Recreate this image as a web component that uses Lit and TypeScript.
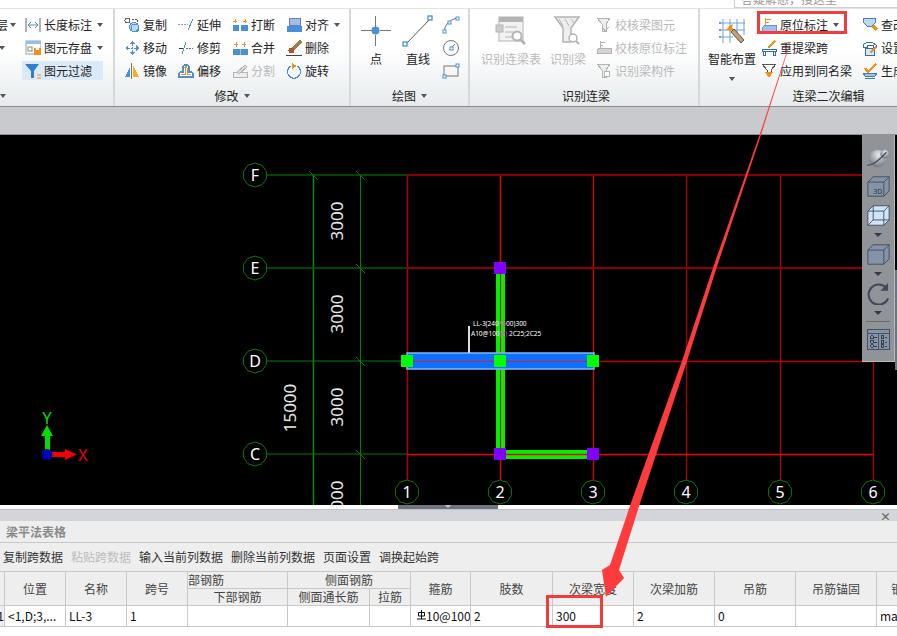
import { LitElement, css, html, svg } from "lit";
import { customElement } from "lit/decorators.js";

const BLUE = "#4a90d9";
const ORANGE = "#f0901e";
const GREY = "#b4b4b4";

// small 16x16 ribbon icons
const icons: Record<string, unknown> = {
  length: svg`<path d="M1 1v14M15 1v14" stroke="#666"/><path d="M3 8h10M3 8l3-3M3 8l3 3M13 8l-3-3M13 8l-3 3" stroke=${BLUE} fill="none"/>`,
  save: svg`<rect x="1" y="1" width="15" height="13" fill="#fff" stroke="#8aa"/><rect x="1" y="1" width="15" height="3" fill="#9cc0e4"/><rect x="3" y="7" width="4" height="4" fill="none" stroke="#888"/><rect x="9" y="8" width="7" height="7" fill=${ORANGE}/><rect x="11" y="8" width="3" height="2" fill="#fff"/>`,
  filter: svg`<path d="M0 1h14L9 8v7H6V8z" fill="#2f7fd0"/><path d="M12 12h4M12 15h4" stroke=${ORANGE}/>`,
  copy: svg`<circle cx="3.500" cy="3.500" r="2.500" fill="none" stroke="#666"/><circle cx="10" cy="10" r="4.500" fill="#bfd9f2" stroke=${BLUE}/><circle cx="11" cy="11" r="4" fill="none" stroke=${BLUE}/><path d="M8 2h5l1 3" stroke="#555" fill="none" stroke-dasharray="2 1"/>`,
  move: svg`<path d="M8 1l3 3H5zM8 15l-3-3h6zM1 8l3-3v6zM15 8l-3 3V5z" fill=${BLUE}/><path d="M8 4v8M4 8h8" stroke=${BLUE} stroke-dasharray="2 1"/>`,
  mirror: svg`<path d="M1 14L6 4v10z" fill=${BLUE}/><path d="M9 2v12h6z" fill="#f6b01c"/><path d="M7.500 0v16" stroke="#777"/>`,
  extend: svg`<path d="M0 7h10" stroke="#99a" stroke-dasharray="2 1"/><path d="M10 13L15 2" stroke=${BLUE}/>`,
  trim: svg`<path d="M1 8h5" stroke="#333"/><path d="M8 8h7" stroke="#667" stroke-dasharray="2 1"/><path d="M4 14L8 2" stroke=${BLUE}/>`,
  offset: svg`<path d="M1 14v-3q0-2 3-2h1V4q0-2 3-2t3 2v5h1q3 0 3 2v3z" fill="#fff" stroke=${BLUE} stroke-width="1.400"/><path d="M3 12q0-1 2-1h2V4.500q0-1 1-1t1 1V11h3q1 0 1 1" fill="none" stroke=${ORANGE}/>`,
  cut: svg`<rect x="1" y="8" width="6" height="6" fill=${BLUE}/><rect x="9" y="8" width="7" height="6" fill=${BLUE}/><path d="M3 2v4M1 4h4M13 2v4M11 4h4" stroke=${ORANGE}/>`,
  merge: svg`<rect x="1" y="9" width="15" height="6" fill=${BLUE}/><path d="M8.500 9v6" stroke="#9cc4ec"/><path d="M4 2v5M2 4h4M12 2v5M10 4h4" stroke=${ORANGE}/>`,
  split: svg`<path d="M1 9h14v5H1z" fill="#eee" stroke=${GREY}/><path d="M5 9l8-7 2 2-8 7z" fill="#ddd" stroke=${GREY}/>`,
  align: svg`<rect x="3" y="1" width="11" height="7" fill="#9cc0e8" stroke="#77a"/><rect x="1" y="9" width="15" height="6" fill=${BLUE}/>`,
  erase: svg`<path d="M7 9L15 1" stroke="#a87a4a" stroke-width="3"/><circle cx="5.500" cy="10.500" r="3" fill="#b0552a"/><path d="M0 15h16" stroke="#444"/>`,
  rotate: svg`<path d="M5 3a6.500 6.500 0 1 0 6 0" fill="none" stroke=${BLUE} stroke-width="1.300"/><path d="M6 0v6l5-3z" fill=${ORANGE}/>`,
  chkBeam: svg`<path d="M1 1h13l-4 6v7H6V7z" fill="#eee" stroke=${GREY}/><path d="M7 11l2 3 4-4" stroke=${GREY} fill="none"/>`,
  chkPos: svg`<path d="M4 1v7M4 2h5M4 5h3" stroke=${GREY} fill="none"/><path d="M1 10l3-2h11v5H1z" fill="#d4d4d4" stroke=${GREY}/>`,
  findBeam: svg`<path d="M1 1h13l-4 6v7H6V7z" fill="#eee" stroke=${GREY}/><circle cx="11" cy="11" r="3" fill="#fff" stroke=${GREY}/>`,
  orig: svg`<path d="M4 1v7M4 2h6M4 5h4" stroke=${ORANGE} fill="none"/><path d="M1 11l3-3h11v7H1z" fill="#9cc0e8" stroke="#6a92c0"/>`,
  lift: svg`<path d="M7 8l7-7" stroke=${ORANGE} stroke-width="2.500"/><path d="M1 9h14v2H1zM2 11v4h2v-4M12 11v4h2v-4" fill="#fff" stroke="#2f6fb0"/>`,
  apply: svg`<path d="M1 1h14l-5 6v2H6V7z" fill="#fff" stroke="#555"/><path d="M4 9h8l-4 6z" fill=${ORANGE}/>`,
  query: svg`<path d="M1 1h12v5l-3 3H5L1 5z" fill="#bcd8f2" stroke="#4a7cae"/><path d="M11 9l4 4" stroke=${ORANGE} stroke-width="3"/>`,
  setup: svg`<path d="M1 5q6-6 13 0v2h-3V5H5v2H1z" fill="#fff" stroke="#2f6fb0"/><rect x="3" y="8" width="9" height="7" fill="#d8e6f4" stroke="#2f6fb0"/><path d="M8 13l6-6" stroke=${ORANGE} stroke-width="2"/>`,
  make: svg`<path d="M3 5l3 4 8-8" stroke=${ORANGE} stroke-width="2.200" fill="none"/><path d="M1 10h14l-2 3H3z" fill="#9cc0e8" stroke="#4a7cae"/><path d="M3 15h10" stroke="#4a7cae"/>`,
};

// big 32x32 ribbon icons
const bigIcons: Record<string, unknown> = {
  point: svg`<path d="M15.500 1v11M15.500 20v11M1 15.500h11M20 15.500h11" stroke="#777"/><circle cx="15.500" cy="15.500" r="4" fill=${BLUE}/>`,
  line: svg`<path d="M4 29L28 4" stroke="#555"/><rect x="1" y="27" width="4" height="4" fill="#fff" stroke=${BLUE} stroke-width="1.300"/><rect x="26" y="1" width="4" height="4" fill="#fff" stroke=${BLUE} stroke-width="1.300"/>`,
  table: svg`<rect x="4" y="2" width="24" height="24" fill="#f2f2f2" stroke=${GREY}/><rect x="4" y="2" width="24" height="5" fill=${GREY}/><rect x="1" y="10" width="7" height="7" fill="#ccc" stroke=${GREY}/><path d="M10 12h12M10 17h8M10 22h8" stroke=${GREY}/><circle cx="22" cy="21" r="4.500" fill="#fff" stroke=${GREY} stroke-width="2"/><path d="M25 24l5 5" stroke=${GREY} stroke-width="2.500"/>`,
  beam: svg`<path d="M3 2h24l-8 11v14h-8V13z" fill="#eee" stroke=${GREY} stroke-width="1.500"/><path d="M7 4l4 7M13 4l4 7M19 4l3 4" stroke=${GREY}/><circle cx="21" cy="23" r="4" fill="#fff" stroke=${GREY} stroke-width="1.500"/><path d="M24 26l3 3" stroke=${GREY} stroke-width="2"/>`,
  smart: svg`<path d="M7 4v24M14 4v24M21 4v16M28 4v16M3 8h26M3 15h26M3 22h14" stroke="#6fa2dc" fill="none"/><path d="M3 8h2M3 15h2M3 22h2" stroke="#35c"/><path d="M13 11l4-2-1 4 3 2-4 0-1 3-1-3-4 0 3-2z" fill=${ORANGE}/><path d="M18 14l10 11-3 3-10-11z" fill="#c8a070" stroke="#555"/>`,
};

const tools = (a: [string, string, boolean?, boolean?][]) => a;

const editRows = tools([
  ["copy", "复制"], ["extend", "延伸"], ["cut", "打断"], ["align", "对齐", false, true],
  ["move", "移动"], ["trim", "修剪"], ["merge", "合并"], ["erase", "删除"],
  ["mirror", "镜像"], ["offset", "偏移"], ["split", "分割", true], ["rotate", "旋转"],
]);
const checkRows = tools([
  ["chkBeam", "校核梁图元", true], ["chkPos", "校核原位标注", true], ["findBeam", "识别梁构件", true],
]);
const beamRows = tools([
  ["orig", "原位标注", false, true], ["lift", "重提梁跨"], ["apply", "应用到同名梁"],
]);
const moreRows = tools([
  ["query", "查改标注"], ["setup", "设置"], ["make", "生成"],
]);

const axisX = [407, 500, 593, 686, 780, 873];
const axisY: [string, number][] = [["F", 175], ["E", 268], ["D", 361], ["C", 454]];

const ring = (x: number, y: number) => {
  const pts: string[] = [];
  for (let i = 0; i < 10; i++) {
    const a = (Math.PI / 5) * i + Math.PI / 10;
    pts.push(`${(x + 12 * Math.cos(a)).toFixed(1)},${(y + 12 * Math.sin(a)).toFixed(1)}`);
  }
  return pts.join(" ");
};

const bubble = (label: string, x: number, y: number) => svg`
  <polygon points=${ring(x, y)} fill="#000" stroke="#0a7a0a" />
  <text x=${x} y=${y + 6} class="bubble" text-anchor="middle">${label}</text>`;

const dim = (label: string, x: number, y: number) => svg`
  <text class="dim" text-anchor="middle" transform="translate(${x} ${y}) rotate(-90)">${label}</text>`;

const tick = (x: number, y: number) => svg`<path d="M${x - 4} ${y - 4}l9 9" stroke="#0a7a0a" />`;

const sq = (x: number, y: number, fill: string) => svg`<rect x=${x - 6} y=${y - 6} width="12" height="12" fill=${fill} />`;

@customElement("app-root")
export class AppRoot extends LitElement {
  private tool([icon, label, off, more]: [string, string, boolean?, boolean?]) {
    return html`<div class="tool ${off ? "off" : ""}">
      <svg class="ico" viewBox="0 0 16 16" shape-rendering="crispEdges">${icons[icon]}</svg>
      <span>${label}</span>
      ${more ? html`<i class="caret"></i>` : ""}
    </div>`;
  }

  private big(icon: string, label: string, off = false) {
    return html`<div class="big ${off ? "off" : ""}">
      <svg class="bigico" viewBox="0 0 32 32">${bigIcons[icon]}</svg>
      <span>${label}</span>
    </div>`;
  }

  private ribbon() {
    return html`<div class="ribbon">
      <section class="group g0">
        <div class="body">
          <div class="stack stub">
            <div class="tool"><span class="cut-left">层</span><i class="caret"></i></div>
            <div class="tool"><i class="caret"></i></div>
          </div>
          <div class="stack">
            <div class="tool"><svg class="ico" viewBox="0 0 16 16">${icons.length}</svg><span>长度标注</span><i class="caret"></i></div>
            <div class="tool"><svg class="ico" viewBox="0 0 16 16">${icons.save}</svg><span>图元存盘</span><i class="caret"></i></div>
            <div class="tool on"><svg class="ico" viewBox="0 0 16 16">${icons.filter}</svg><span>图元过滤</span></div>
          </div>
        </div>
        <div class="label"><i class="caret"></i></div>
      </section>
      <section class="group g1">
        <div class="body edit">${editRows.map((t) => this.tool(t))}</div>
        <div class="label">修改<i class="caret"></i></div>
      </section>
      <section class="group g2">
        <div class="body">
          ${this.big("point", "点")}
          ${this.big("line", "直线")}
          <div class="minis">
            <svg viewBox="0 0 18 18"><path d="M2 16Q3 5 15 2" fill="none" stroke="#777"/><rect x="1" y="14" width="3" height="3" fill="#fff" stroke=${BLUE}/><rect x="14" y="1" width="3" height="3" fill="#fff" stroke=${BLUE}/><rect x="6" y="5" width="3" height="3" fill="#fff" stroke=${BLUE}/></svg>
            <svg viewBox="0 0 18 18"><circle cx="9" cy="9" r="7.500" fill="none" stroke="#777"/><path d="M9 9l4-4" stroke="#777"/><rect x="8" y="8" width="3" height="3" fill="#fff" stroke=${BLUE}/></svg>
            <svg viewBox="0 0 18 18"><rect x="2" y="4" width="14" height="10" fill="none" stroke="#777"/><rect x="1" y="13" width="3" height="3" fill="#fff" stroke=${BLUE}/><rect x="14" y="2" width="3" height="3" fill="#fff" stroke=${BLUE}/></svg>
          </div>
        </div>
        <div class="label">绘图<i class="caret"></i></div>
      </section>
      <section class="group g3">
        <div class="body">
          ${this.big("table", "识别连梁表", true)}
          ${this.big("beam", "识别梁", true)}
          <div class="stack">${checkRows.map((t) => this.tool(t))}</div>
        </div>
        <div class="label">识别连梁</div>
      </section>
      <section class="group g4">
        <div class="body">
          <div class="big smart">
            <svg class="bigico" viewBox="0 0 32 32">${bigIcons.smart}</svg>
            <span>智能布置</span>
            <i class="caret"></i>
          </div>
          <div class="stack">${beamRows.map((t) => this.tool(t))}</div>
          <div class="stack more">${moreRows.map((t) => this.tool(t))}</div>
        </div>
        <div class="label">连梁二次编辑</div>
      </section>
    </div>`;
  }

  private drawing() {
    return html`<svg class="cad" viewBox="0 135 897 370">
      <path d="M313.500 175V505" stroke="#008a00" stroke-width="1.500" />
      <path d="M360.500 175V505" stroke="#008000" />
      <path d="M267 175H407M267 268H407" stroke="#005c00" stroke-width="1.500" />
      <path d="M267 361H407M267 454H407" stroke="#0a7a0a" />
      ${[[313, 175], [360, 175], [360, 268], [360, 361], [360, 454]].map(([x, y]) => tick(x, y))}
      <path d="M407.500 175V480" stroke="#b00000" stroke-width="1.500" />
      <path d="M686.500 175V480M780.500 175V480M873.500 361V480" stroke="#b00000" stroke-width="1.300" />
      <path d="M500.500 175V480" stroke="#e00000" stroke-width="1.500" />
      <path d="M593.500 175V480" stroke="#e00000" stroke-width="1.300" />
      <path d="M407 175H873M407 268H873" stroke="#8c0000" stroke-width="2" />
      <path d="M407 361.500H873" stroke="#b80000" stroke-width="1.300" />
      <rect x="496" y="268" width="9" height="186" fill="#00f000" />
      <rect x="500" y="450" width="93" height="9" fill="#00f000" />
      <path d="M407 454.500H873" stroke="#f00000" stroke-width="1.300" />
      <path d="M500.500 268V460" stroke="#f00000" />
      <rect x="407" y="353" width="187" height="16" fill="#0f6fff" stroke="#7fb7ff" stroke-width="1.500" />
      <path d="M407 361.500H594" stroke="#d02040" />
      <rect x="468" y="326" width="2" height="27" fill="#ddd" />
      <text class="note" x="473" y="326">LL-3(240<tspan fill="#ff40ff">*5</tspan>00)300</text>
      <text class="note" x="471" y="336">A10@100<tspan fill="#ff40ff">(2)</tspan> 2C25;2C25</text>
      ${sq(500, 268, "#8000ff")} ${sq(500, 454, "#8000ff")} ${sq(593, 454, "#8000ff")}
      ${sq(407, 361, "#00ff00")} ${sq(500, 361, "#00ff00")} ${sq(593, 361, "#00ff00")}
      ${axisY.map(([l, y]) => bubble(l, 255, y))}
      ${axisX.map((x, i) => bubble(String(i + 1), x, 492))}
      ${dim("3000", 343, 221)} ${dim("3000", 343, 314)} ${dim("3000", 343, 407)} ${dim("3000", 343, 500)}
      ${dim("15000", 296, 408)}
      <rect x="45" y="432" width="5" height="20" fill="#00e000" />
      <path d="M47 425l6 11H41z" fill="#00e000" />
      <rect x="50" y="452" width="18" height="5" fill="#f00000" />
      <path d="M77 454.500l-12 5.500v-11z" fill="#f00000" />
      <circle cx="47" cy="454.500" r="5.500" fill="#0000b4" />
      <text class="axis" x="47" y="424" fill="#00e000" text-anchor="middle">Y</text>
      <text class="axis" x="83" y="461" fill="#f00000" text-anchor="middle">X</text>
    </svg>`;
  }

  private viewBar() {
    return html`<div class="viewbar">
      <svg class="globe" viewBox="0 0 28 24">
        <defs><radialGradient id="gl" cx=".55" cy=".3" r=".8"><stop offset="0" stop-color="#e8ecf0"/><stop offset="1" stop-color="#5e6670"/></radialGradient></defs>
        <ellipse cx="13" cy="13" rx="10" ry="10" fill="url(#gl)"/>
        <circle cx="21" cy="8" r="5" fill="url(#gl)"/>
        <path d="M1 21Q10 21 23 6" fill="none" stroke="#4b5462" stroke-width="1.500"/>
      </svg>
      <svg class="cube" viewBox="0 0 26 24">
        <path d="M1 7L7 1H25V17L19 23H1z" fill="#8593a8" stroke="#3f4858"/><path d="M1 7H19V23M19 7L25 1" fill="none" stroke="#3f4858"/>
        <text x="7" y="21" class="cube3d">3D</text>
      </svg>
      <svg class="cube" viewBox="0 0 26 24">
        <path d="M1 7L7 1H25V17L19 23H1z" fill="#cfe4fb" stroke="#3f4858"/><path d="M1 7H19V23M19 7L25 1M7 1V17H25M7 17L1 23" fill="none" stroke="#3f4858"/>
      </svg>
      <i class="drop"></i>
      <svg class="cube" viewBox="0 0 26 24">
        <path d="M1 7L7 1H25V17L19 23H1z" fill="#8593a8" stroke="#3f4858"/><path d="M1 7H19V23M19 7L25 1" fill="none" stroke="#3f4858"/>
      </svg>
      <i class="drop"></i>
      <svg class="cube" viewBox="0 0 24 24">
        <path d="M20 6A10.500 10.500 0 1 0 22 17" fill="none" stroke="#3f4858" stroke-width="2.200"/><path d="M22 1v8h-8z" fill="#3f4858"/>
      </svg>
      <i class="drop"></i>
      <hr />
      <svg class="cube" viewBox="0 0 26 24" shape-rendering="crispEdges">
        <rect x="1" y="1" width="24" height="22" fill="#8593a8" stroke="#3f4858"/><path d="M1 5H25M13 5V23" stroke="#3f4858"/>
        <path d="M4 8h3v3H4zM4 13h3v3H4zM4 18h3v3H4zM16 8h3v3h-3zM16 13h3v3h-3zM16 18h3v3h-3z" fill="none" stroke="#2e3644"/>
        <path d="M8 10h3M8 15h3M8 20h3M20 10h3M20 15h3M20 20h3" stroke="#2e3644"/>
      </svg>
    </div>`;
  }

  private table() {
    return html`<div class="grid">
      <div class="th r2 first"></div>
      <div class="th r2">位置</div>
      <div class="th r2">名称</div>
      <div class="th r2">跨号</div>
      <div class="th left">部钢筋</div>
      <div class="th c2">侧面钢筋</div>
      <div class="th r2">箍筋</div>
      <div class="th r2">肢数</div>
      <div class="th r2">次梁宽度</div>
      <div class="th r2">次梁加筋</div>
      <div class="th r2">吊筋</div>
      <div class="th r2">吊筋锚固</div>
      <div class="th r2 end">钢筋</div>
      <div class="th">下部钢筋</div>
      <div class="th">侧面通长筋</div>
      <div class="th">拉筋</div>
      <div class="td first">1</div>
      <div class="td">&lt;1,D;3,...</div>
      <div class="td">LL-3</div>
      <div class="td">1</div>
      <div class="td"></div>
      <div class="td"></div>
      <div class="td"></div>
      <div class="td"><svg class="rebar" viewBox="0 0 9 10"><path d="M1.500 2.500h6v3.500h-6zM4.500 0v9M0 9h9" fill="none" stroke="#111"/></svg>10@100</div>
      <div class="td">2</div>
      <div class="td">300</div>
      <div class="td">2</div>
      <div class="td">0</div>
      <div class="td"></div>
      <div class="td end">ma</div>
    </div>`;
  }

  render() {
    return html`
      <div class="topline"><div class="search">答疑解惑，搜这里</div></div>
      ${this.ribbon()}
      <div class="band"></div>
      <div class="view">
        ${this.drawing()}
        ${this.viewBar()}
        <div class="edge"></div>
      </div>
      <div class="splitter"><div class="handle"><i></i></div></div>
      <div class="panel">
        <div class="titlebar"><span>×</span></div>
        <div class="title">梁平法表格</div>
        <div class="actions">
          <span>复制跨数据</span>
          <span class="off">粘贴跨数据</span>
          <span>输入当前列数据</span>
          <span>删除当前列数据</span>
          <span>页面设置</span>
          <span>调换起始跨</span>
        </div>
        ${this.table()}
      </div>
      <div class="mark mark-top"></div>
      <div class="mark mark-cell"></div>
      <svg class="arrow" viewBox="0 0 897 636">
        <path d="M790 42L790.500 42L761 135L716.500 268L687 361L641 500L619 570L624 578L606 597L602 570L610 565L632 500L682 361L713 268L759.500 135z" fill="#ff3b3b" />
      </svg>
    `;
  }

  static styles = css`
    :host {
      display: flex;
      flex-direction: column;
      position: relative;
      width: 897px;
      height: 636px;
      overflow: hidden;
      background: #fff;
      color: #222;
      font-family: "Noto Sans CJK SC", "Noto Sans", sans-serif;
      font-size: 12px;
      line-height: 16px;
    }

    .topline {
      flex: none;
      height: 9px;
      display: flex;
      justify-content: flex-end;
      background: #fff;
      border-bottom: 1px solid #e2e2e2;
      box-sizing: border-box;
    }
    .search {
      width: 156px;
      height: 7px;
      display: flex;
      align-items: flex-end;
      padding-left: 6px;
      background: #fff;
      border: solid #cfcfcf;
      border-width: 0 0 1px 1px;
      color: #999;
      overflow: hidden;
    }

    /* Ribbon */
    .ribbon {
      flex: none;
      display: flex;
      height: 98px;
      background: linear-gradient(#fff 40%, #e7ebed);
      border-bottom: 1px solid #8d8d8d;
      box-sizing: border-box;
    }
    .group {
      flex: none;
      display: flex;
      flex-direction: column;
      box-sizing: border-box;
      border-right: 2px solid #d6d9dc;
    }
    .body {
      flex: 1;
      display: flex;
    }
    .label {
      flex: none;
      height: 20px;
      display: flex;
      align-items: center;
      justify-content: center;
      gap: 3px;
    }
    .g0 { width: 115px; }
    .g0 .body { padding-top: 4px; }
    .g0 .label { justify-content: flex-start; }
    .g0 .label .caret { margin-left: 0; }
    .g0 .stub { width: 25px; overflow: hidden; }
    .stub .caret { margin-left: -1px; }
    .cut-left { margin-left: -4px; }
    .g1 { width: 236px; }
    .g2 { width: 119px; }
    .g3 { width: 230px; }
    .g3 .label { padding-left: 4px; }
    .g4 { flex: 1; border-right: 0; min-width: 0; }
    .g4 .label { padding-left: 60px; }
    .g1 .body.edit {
      display: grid;
      grid-template-columns: 54px 54px 54px auto;
      grid-auto-rows: 23px;
      padding: 4px 0 0 9px;
    }
    .g2 .body { padding: 4px 0 0 9px; gap: 10px; }
    .g3 .body { padding: 4px 0 0 11px; gap: 9px; }
    .g3 .stack { margin-left: 1px; }
    .g4 .body { padding: 4px 0 0 8px; }
    .g4 .stack { width: 101px; margin-left: 5px; flex: none; }
    .g4 .stack.more { width: 60px; margin-left: 0; overflow: hidden; }

    .stack {
      display: flex;
      flex-direction: column;
      flex: none;
    }
    .tool {
      height: 23px;
      display: flex;
      align-items: center;
      gap: 3px;
      white-space: nowrap;
      box-sizing: border-box;
    }
    .tool.on {
      background: #dce9f8;
      padding-right: 6px;
      margin-left: -3px;
      padding-left: 3px;
      height: 19px;
      margin-top: 2px;
    }
    .ico {
      width: 16px;
      height: 16px;
      flex: none;
    }
    .caret {
      display: inline-block;
      width: 0;
      height: 0;
      margin-left: 2px;
      border: 3.5px solid transparent;
      border-top: 4px solid #555;
      border-bottom: 0;
    }
    .off { color: #b9b9b9; }
    .big {
      display: flex;
      flex-direction: column;
      align-items: center;
      flex: none;
      gap: 4px;
    }
    .bigico {
      width: 32px;
      height: 32px;
      margin-top: 2px;
    }
    .smart .caret { margin: 6px 0 0; }
    .minis {
      display: flex;
      flex-direction: column;
      gap: 5px;
      padding-top: 3px;
      margin-left: -2px;
    }
    .minis svg { width: 18px; height: 18px; }

    .band {
      flex: none;
      height: 28px;
      background: #c8cacd;
      border-bottom: 1px solid #8d9094;
      box-sizing: border-box;
    }

    /* Drawing area */
    .view {
      flex: none;
      position: relative;
      height: 370px;
      background: #000;
    }
    .cad {
      display: block;
      width: 897px;
      height: 370px;
    }
    .cad text { font-family: "Noto Sans", sans-serif; }
    .bubble { fill: #fff; font-size: 16px; }
    .dim { fill: #e8e8e8; font-size: 17px; }
    .note { fill: #fff; font-size: 6.5px; }
    .axis { font-size: 16px; }
    .viewbar {
      position: absolute;
      left: 862px;
      top: 0;
      width: 33px;
      height: 227px;
      box-sizing: border-box;
      padding-top: 12px;
      display: flex;
      flex-direction: column;
      align-items: center;
      gap: 6px;
      background: #909398;
      border-right: 1px solid #b8babd;
      border-bottom: 1px solid #b8babd;
    }
    .globe { width: 25px; height: 21px; flex: none; margin-bottom: 1px; }
    .cube { width: 23px; height: 23px; flex: none; }
    .cube3d { fill: #2e3644; font-size: 8px; font-family: "Noto Sans", sans-serif; }
    .drop {
      flex: none;
      width: 0;
      height: 0;
      border: 4px solid transparent;
      border-top: 4px solid #343c4a;
      border-bottom: 0;
    }
    .viewbar hr {
      flex: none;
      width: 24px;
      height: 1px;
      margin: 0;
      border: 0;
      background: #686c72;
    }
    .edge {
      position: absolute;
      left: 895px;
      top: 135px;
      width: 2px;
      height: 100px;
      background: #6d7580;
    }

    .splitter {
      flex: none;
      height: 4px;
      display: flex;
      justify-content: center;
      background: #fff;
    }
    .handle {
      width: 100px;
      margin-left: -2px;
      display: flex;
      justify-content: center;
      background: #6d7580;
    }
    .handle i {
      width: 0;
      height: 0;
      border: 3px solid transparent;
      border-top: 3px solid #c4c8cc;
      border-bottom: 0;
    }

    /* Bottom table panel */
    .panel {
      flex: 1;
      min-height: 0;
      display: flex;
      flex-direction: column;
      overflow: hidden;
      background: #fff;
    }
    .titlebar {
      flex: none;
      height: 12px;
      display: flex;
      justify-content: flex-end;
      align-items: center;
      padding-right: 6px;
      background: #d3d5da;
      border-top: 1px solid #c0c2c6;
      box-sizing: border-box;
      color: #666;
      font-size: 11px;
      font-weight: 700;
      line-height: 10px;
    }
    .title {
      flex: none;
      height: 22px;
      box-sizing: border-box;
      padding-left: 6px;
      display: flex;
      align-items: center;
      background: #eee;
      border-bottom: 1px solid #c8c8c8;
      color: #8a8a8a;
      font-weight: 700;
    }
    .actions {
      flex: none;
      height: 28px;
      box-sizing: border-box;
      display: flex;
      align-items: center;
      gap: 8px;
      padding-left: 3px;
      background: #eee;
      color: #333;
    }
    .actions .off { color: #bcbcbc; }
    .grid {
      flex: none;
      display: grid;
      grid-template-columns: 5px 61px 61px 61px 100px 82px 41px 60px 82px 81px 81px 81px 81px 52px;
      grid-template-rows: 17px 17px 21px;
      border-top: 1px solid #c8c8c8;
      color: #444;
    }
    .th, .td {
      box-sizing: border-box;
      border-right: 1px solid #c8c8c8;
      border-bottom: 1px solid #c8c8c8;
      overflow: hidden;
      white-space: nowrap;
      display: flex;
      align-items: center;
    }
    .th {
      justify-content: center;
      background: #eee;
    }
    .th.r2 { grid-row: span 2; }
    .th.c2 { grid-column: span 2; }
    .th.left { justify-content: flex-start; }
    .th.end, .td.end { border-right: 0; }
    .td {
      padding-left: 3px;
      background: #fff;
      color: #111;
    }
    .td.first {
      background: #eee;
      padding: 0;
      justify-content: flex-end;
    }
    .rebar {
      width: 9px;
      height: 10px;
      flex: none;
      margin: 0 0 3px 3px;
    }

    /* Red annotations drawn over the screenshot */
    .mark {
      position: absolute;
      box-sizing: border-box;
      border: 3px solid #f23c3c;
    }
    .mark-top { left: 757px; top: 11px; width: 90px; height: 23px; }
    .mark-cell { left: 546px; top: 595px; width: 57px; height: 33px; }
    .arrow {
      position: absolute;
      left: 0;
      top: 0;
      width: 897px;
      height: 636px;
      pointer-events: none;
    }
  `;
}

declare global {
  interface HTMLElementTagNameMap {
    "app-root": AppRoot;
  }
}
